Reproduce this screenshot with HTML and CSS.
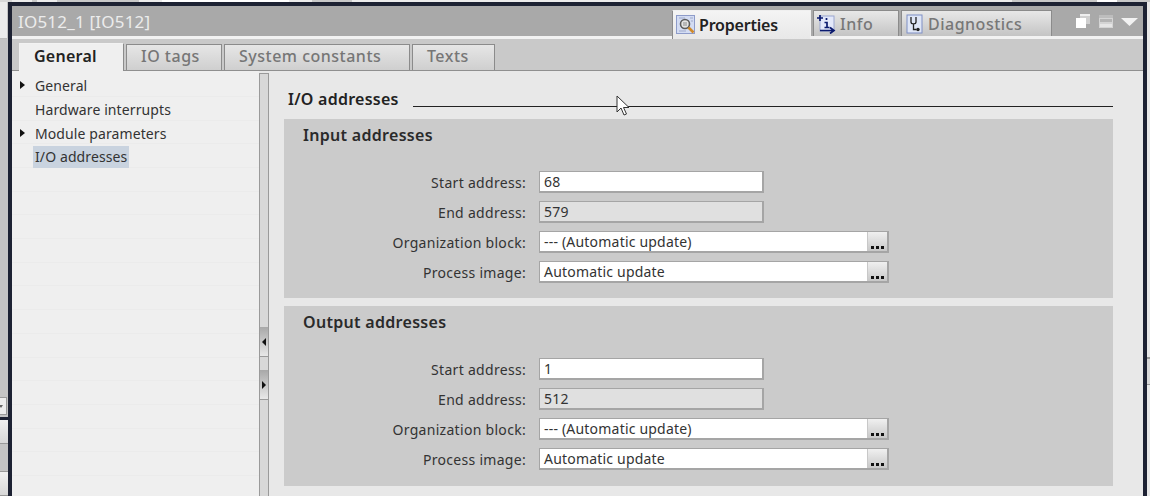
FILE: index.html
```html
<!DOCTYPE html>
<html lang="en">
<head>
<meta charset="utf-8">
<title>IO512 properties</title>
<link rel="stylesheet" href="styles.css">
</head>
<body>
<div class="topstrip">
  <i class="seg w12 gap"></i><i class="seg w20 lt"></i><i class="seg w5"></i><i class="seg w20 lt"></i><i class="seg w2"></i><i class="seg w80 gr"></i>
  <i class="seg w23 lt"></i><i class="seg w127 wh"></i><i class="seg w23 lt"></i><i class="seg w40 gr"></i><i class="seg w660 lt"></i><i class="seg w85 gr"></i><i class="seg w20 wh"></i><i class="seg fill gr"></i>
</div>
<div class="frame">
  <aside class="edge edge-left">
    <div class="edge-top"></div>
    <div class="edge-combo"><span></span></div>
    <div class="edge-band"></div>
    <div class="edge-btn"></div>
    <div class="edge-gap"></div>
    <div class="edge-btn"></div>
  </aside>
  <main class="window">
    <header class="titlebar">
      <span class="title">IO512_1 [IO512]</span>
      <div class="inspector-tabs">
        <div class="itab active">
          <svg class="ico" viewBox="0 0 20 20"><rect x=".5" y=".5" width="18" height="18" fill="#d3dcf3" stroke="#8d9bc9"/><path d="M3 3h6M3 16h7M14 3h3M15 6h2" stroke="#9fa9c9"/><circle cx="9" cy="9" r="4.500" fill="#e4e4e4" stroke="#5c5c5c" stroke-width="1.600"/><path d="M7 8h4M7 10h4" stroke="#8a8a8a"/><path d="M12.500 12.500l5 5" stroke="#d08a2a" stroke-width="2.600"/></svg>
          <span>Properties</span>
        </div>
        <div class="itab">
          <svg class="ico" viewBox="0 0 20 20"><rect x="3" y="2" width="14" height="15" fill="#e3e8fa" stroke="#9aa6cf"/><path d="M0 4h6M3 1v6M3 16.500h13M13 13.500l4 3-4 3" stroke="#0b1a6e" stroke-width="1.700" fill="none"/><path d="M9.500 4v2M7.500 8.500h2.500v5M7.500 13.500h5" stroke="#0b1a6e" stroke-width="1.700" fill="none"/></svg>
          <span>Info</span>
        </div>
        <div class="itab">
          <svg class="ico" viewBox="0 0 20 20"><rect x="2" y="1" width="15" height="18" fill="#dfe6f6" stroke="#7f8fc5"/><path d="M6 3v5c0 2.500 5 2.500 5 0V3M8.500 10.500v5h3" stroke="#222" stroke-width="1.300" fill="none"/><circle cx="13" cy="15.500" r="1.700" fill="#222"/></svg>
          <span>Diagnostics</span>
        </div>
      </div>
      <div class="window-tools">
        <svg class="tool tool-restore" viewBox="0 0 14 14"><rect x="4" y="0" width="10" height="10" fill="#cfcfcf"/><rect x="4" y="0" width="10" height="2" fill="#eee"/><rect x="0" y="4" width="10" height="10" fill="#fff"/></svg>
        <svg class="tool tool-lines" viewBox="0 0 14 13"><rect width="14" height="13" fill="#d4d4d4"/><rect x="0" y="0" width="14" height="3" fill="#bdbdbd"/><rect x="1" y="4" width="12" height="3" fill="#b4b4b4"/><rect x="1" y="9" width="12" height="3" fill="#e6e6e6"/></svg>
        <svg class="tool tool-arrow" viewBox="0 0 17 8"><path d="M0 0h17L8.500 8z" fill="#f2f2f2"/></svg>
      </div>
    </header>
    <div class="separator"></div>
    <nav class="tabs">
      <div class="tab active">General</div>
      <div class="tab">IO tags</div>
      <div class="tab">System constants</div>
      <div class="tab">Texts</div>
    </nav>
    <div class="body">
      <ul class="tree">
        <li class="row"><span class="caret"></span><span class="label">General</span></li>
        <li class="row"><span class="label">Hardware interrupts</span></li>
        <li class="row"><span class="caret"></span><span class="label">Module parameters</span></li>
        <li class="row"><span class="label selected">I/O addresses</span></li>
        <li class="row"></li><li class="row"></li><li class="row"></li><li class="row"></li><li class="row"></li>
        <li class="row"></li><li class="row"></li><li class="row"></li><li class="row"></li><li class="row"></li>
        <li class="row"></li><li class="row"></li><li class="row"></li>
      </ul>
      <div class="splitter">
        <div class="grip grip-left"><span></span></div>
        <div class="grip grip-right"><span></span></div>
      </div>
      <section class="content">
        <div class="heading"><h2>I/O addresses</h2><div class="rule"></div></div>
        <div class="group">
          <h3>Input addresses</h3>
          <div class="form">
            <label>Start address:</label><div class="field short">68</div>
            <label>End address:</label><div class="field short readonly">579</div>
            <label>Organization block:</label><div class="field long"><span class="val">--- (Automatic update)</span><span class="more"><i></i><i></i><i></i></span></div>
            <label>Process image:</label><div class="field long"><span class="val">Automatic update</span><span class="more"><i></i><i></i><i></i></span></div>
          </div>
        </div>
        <div class="group">
          <h3>Output addresses</h3>
          <div class="form">
            <label>Start address:</label><div class="field short">1</div>
            <label>End address:</label><div class="field short readonly">512</div>
            <label>Organization block:</label><div class="field long"><span class="val">--- (Automatic update)</span><span class="more"><i></i><i></i><i></i></span></div>
            <label>Process image:</label><div class="field long"><span class="val">Automatic update</span><span class="more"><i></i><i></i><i></i></span></div>
          </div>
        </div>
      </section>
    </div>
  </main>
  <aside class="edge edge-right">
    <div class="edge-piece"></div>
  </aside>
</div>
<svg class="cursor" viewBox="0 0 14 22"><path d="M1 1v16l4-4 3 7 2.500-1-3-6.500h5.500z" fill="#fff" stroke="#333" stroke-width="1"/></svg>
</body>
</html>
```

FILE: styles.css
```css
* { box-sizing: border-box; }
html, body { margin: 0; padding: 0; height: 100%; overflow: hidden; }
body {
  width: 1150px; height: 496px; position: relative;
  font-family: "Noto Sans", "Open Sans", sans-serif;
  font-size: 14px; color: #333; background: #c9c9c9;
  display: flex; flex-direction: column;
}
.topstrip { height: 2px; background: #c8c8c8; flex: none; display: flex; }
.seg { display: block; height: 2px; flex: none; }
.w2 { width: 2px; } .w5 { width: 5px; } .w12 { width: 12px; } .w20 { width: 20px; } .w23 { width: 23px; }
.w40 { width: 40px; } .w80 { width: 80px; } .w85 { width: 85px; } .w127 { width: 127px; } .w660 { width: 660px; }
.fill { flex: 1; }
.lt { background: #ececec; } .gr { background: #c8c8c8; } .wh { background: #fff; } .gap { background: #d8d8d8; }

.frame { flex: 1; display: flex; min-height: 0; }
.edge { flex: none; background: #c4c4c4; display: flex; flex-direction: column; }
.edge-left { width: 8px; }
.edge-top { width: 7px; height: 40px; background: #ececec; border-bottom: 1px solid #bdbdbd; }
.edge-combo { width: 7px; height: 20px; margin-top: 358px; background: #ececec; border: 1px solid #999; border-left: 0; display: flex; align-items: center; }
.edge-combo span { border-top: 3px solid #666; border-left: 2px solid transparent; border-right: 2px solid transparent; margin-left: -1px; }
.edge-band { height: 3px; margin-top: 2px; background: #1d2233; }
.edge-btn { height: 26px; background: linear-gradient(#f0f0f0, #d8d8d8); border-bottom: 1px solid #999; }
.edge-gap { height: 30px; background: #c4c4c4; border-bottom: 1px solid #999; }
.edge-right { width: 3px; background: #e8e8e8; }
.edge-piece { height: 28px; margin-top: 355px; background: #d8d8d8; border-top: 2px solid #999; border-bottom: 1px solid #999; }

.window {
  flex: 1; min-width: 0; display: flex; flex-direction: column;
  border: 4px solid #1d2233; border-bottom: 0; background: #e8e8e8;
}
.titlebar { height: 30px; flex: none; background: #a9a9a9; display: flex; align-items: flex-end; padding-left: 6px; }
.title { color: #ececec; font-size: 17px; align-self: center; flex: 1; letter-spacing: .2px; }
.inspector-tabs { display: flex; align-items: flex-end; height: 100%; gap: 2px; }
.itab {
  height: 26px; display: flex; align-items: center; gap: 3px; padding: 0 10px 0 3px;
  border: 1px solid #8b8b8b; border-bottom: 0; background: linear-gradient(#e8e8e8, #c4c4c4);
  color: #777; font-size: 16px; font-weight: 500; letter-spacing: .5px;
}
.itab.active { height: 29px; width: 139px; background: linear-gradient(#f4f4f4, #e8e8e8); border-color: #f0f0f0; border-left-color: #8b8b8b; color: #222; margin-bottom: -3px; position: relative; font-weight: 600; letter-spacing: -.2px; }
.itab:nth-child(2) { width: 86px; }
.itab:nth-child(3) { width: 151px; }
.ico { width: 20px; height: 20px; flex: none; }
.window-tools { width: 91px; flex: none; display: flex; align-items: center; align-self: stretch; padding-left: 24px; }
.tool { display: block; flex: none; }
.tool-restore { width: 14px; height: 14px; margin-right: 9px; }
.tool-lines { width: 14px; height: 13px; margin-right: 8px; }
.tool-arrow { width: 17px; height: 8px; margin-top: 1px; }

.separator { height: 3px; flex: none; background: #f2f2f2; }
.tabs { height: 32px; flex: none; display: flex; align-items: flex-end; gap: 2px; padding-left: 7px; background: #c9c9c9; border-bottom: 1px solid #8f8f8f; }
.tab {
  height: 26px; padding: 0 0 3px 14px; display: flex; align-items: center; white-space: nowrap;
  border: 1px solid #8b8b8b; border-bottom: 0; background: linear-gradient(#e6e6e6, #cfcfcf);
  color: #767676; font-size: 16px; font-weight: 500; letter-spacing: .5px;
}
.tab.active { height: 28px; margin-bottom: -1px; color: #222; background: #efefef; border-color: #f2f2f2; border-right-color: #8b8b8b; width: 105px; position: relative; font-weight: 600; letter-spacing: .25px; }
.tab:nth-child(2) { width: 96px; }
.tab:nth-child(3) { width: 186px; }
.tab:nth-child(4) { width: 83px; }

.body { flex: 1; min-height: 0; display: flex; }
.tree { width: 247px; flex: none; margin: 0; padding: 2.300px 0 0; list-style: none; background: #efefef; overflow: hidden; }
.row { height: 23.700px; display: flex; align-items: center; border-bottom: 1px solid #ebebeb; padding: 3px 0 0 20px; position: relative; font-size: 14px; letter-spacing: .1px; }
.caret { position: absolute; left: 8px; top: 8px; border-left: 5px solid #111; border-top: 4.500px solid transparent; border-bottom: 4.500px solid transparent; }
.label { padding: 0 2px; margin-left: 1px; line-height: 22px; }
.selected { background: #c9d3df; }
.splitter { width: 10px; flex: none; margin-top: 2px; background: #d8d8d8; border: 1px solid #9a9a9a; border-bottom: 0; display: flex; flex-direction: column; padding-top: 253px; }
.grip { height: 30px; width: 8px; background: linear-gradient(#a8a8a8, #e8e8e8); border-bottom: 1px solid #9a9a9a; display: flex; align-items: center; justify-content: center; }
.grip-right { margin-top: 13px; }
.grip span { border-top: 4px solid transparent; border-bottom: 4px solid transparent; }
.grip-left span { border-right: 4px solid #111; }
.grip-right span { border-left: 4px solid #111; }
.content { flex: 1; min-width: 0; padding: 17px 30px 0 15px; background: #e8e8e8; }
.heading { display: flex; align-items: flex-start; height: 31px; padding-left: 4px; }
.heading h2 { margin: 0; font-size: 16px; font-weight: 600; color: #222; line-height: 22px; letter-spacing: .25px; }
.rule { flex: 1; height: 1px; background: #222; margin: 18px 0 0 14px; }
.group { background: #cbcbcb; height: 179px; margin-bottom: 8px; padding: 4px 0 0 19px; }
.group + .group { height: 180px; }
.group h3 { margin: 0; font-size: 16px; font-weight: 600; color: #2a2a2a; line-height: 24px; letter-spacing: .3px; }
.form { display: grid; grid-template-columns: 223px auto; grid-auto-rows: 30px; justify-content: start; align-items: center; margin-top: 20px; column-gap: 13px; }
.form label { text-align: right; letter-spacing: .3px; font-size: 14px; }
.field { height: 22px; background: #fff; border: 2px solid #a5a5a5; border-width: 1px 2px 2px 1px; display: flex; align-items: center; padding-left: 4px; font-size: 14px; color: #333; letter-spacing: .2px; }
.short { width: 225px; }
.readonly { background: #e0e0e0; }
.long { width: 350px; padding-right: 0; }
.val { flex: 1; }
.more { width: 20px; height: 100%; background: linear-gradient(#f0f0f0, #c8c8c8); border-left: 1px solid #c8c8c8; display: flex; align-items: flex-end; justify-content: center; gap: 2px; padding-bottom: 2px; }
.more i { width: 3px; height: 3px; background: #111; }
.cursor { position: absolute; left: 616px; top: 95px; width: 14px; height: 22px; }
```
